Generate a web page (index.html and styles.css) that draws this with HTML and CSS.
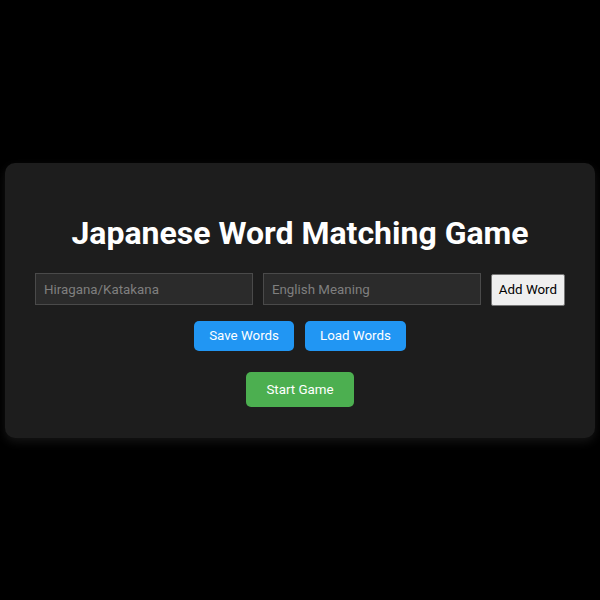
FILE: index.html
```html
<!DOCTYPE html>
<html>
<head>
<meta charset="utf-8">
<link rel="stylesheet" href="styles.css">
</head>
<body>
<div class="card">
  <h1 class="title">Japanese Word Matching Game</h1>
  <div class="input-row">
    <input class="field" type="text" placeholder="Hiragana/Katakana">
    <input class="field" type="text" placeholder="English Meaning">
    <button class="add-btn">Add Word</button>
  </div>
  <div class="store-row">
    <button class="btn btn-blue">Save Words</button>
    <button class="btn btn-blue">Load Words</button>
  </div>
  <div class="start-row">
    <button class="btn btn-green">Start Game</button>
  </div>
</div>
</body>
</html>
```

FILE: styles.css
```css
html, body {
  margin: 0;
  padding: 0;
  height: 100%;
}
body {
  background: #000;
  font-family: Roboto, "Liberation Sans", sans-serif;
  display: flex;
  align-items: center;
  justify-content: center;
}
.card {
  width: 530px;
  background: #1d1d1d;
  border-radius: 10px;
  padding: 30px 30px 31px;
  box-shadow: 0 4px 10px rgba(255, 255, 255, 0.08);
}
.title {
  color: #fff;
  font-size: 32px;
  font-weight: 700;
  text-align: center;
  margin: 21px 0 21px;
  line-height: 38px;
}
.input-row {
  display: flex;
  gap: 10px;
  align-items: center;
}
.field {
  flex: 1;
  min-width: 0;
  height: 32px;
  box-sizing: border-box;
  background: #2b2b2b;
  border: 1px solid #4a4a4a;
  color: #ddd;
  font-family: Roboto, "Liberation Sans", sans-serif;
  font-size: 13.333px;
  padding: 0 8px;
  outline: none;
}
.field::placeholder {
  color: #7f7f7f;
}
.add-btn {
  height: 32px;
  box-sizing: border-box;
  background: #efefef;
  border: 1px solid #767676;
  border-radius: 2px;
  color: #000;
  font-family: Roboto, "Liberation Sans", sans-serif;
  font-size: 13.333px;
  padding: 0 7px;
  margin-top: 1px;
}
.store-row {
  display: flex;
  justify-content: center;
  gap: 11px;
  margin-top: 15px;
}
.start-row {
  display: flex;
  justify-content: center;
  margin-top: 21px;
}
.btn {
  border: none;
  border-radius: 5px;
  color: #fff;
  font-family: Roboto, "Liberation Sans", sans-serif;
  font-size: 13.333px;
  cursor: pointer;
}
.btn-blue {
  background: #2196f3;
  height: 30px;
  padding: 0 15px;
}
.btn-green {
  background: #4caf50;
  height: 35px;
  padding: 0 20px;
}
```
